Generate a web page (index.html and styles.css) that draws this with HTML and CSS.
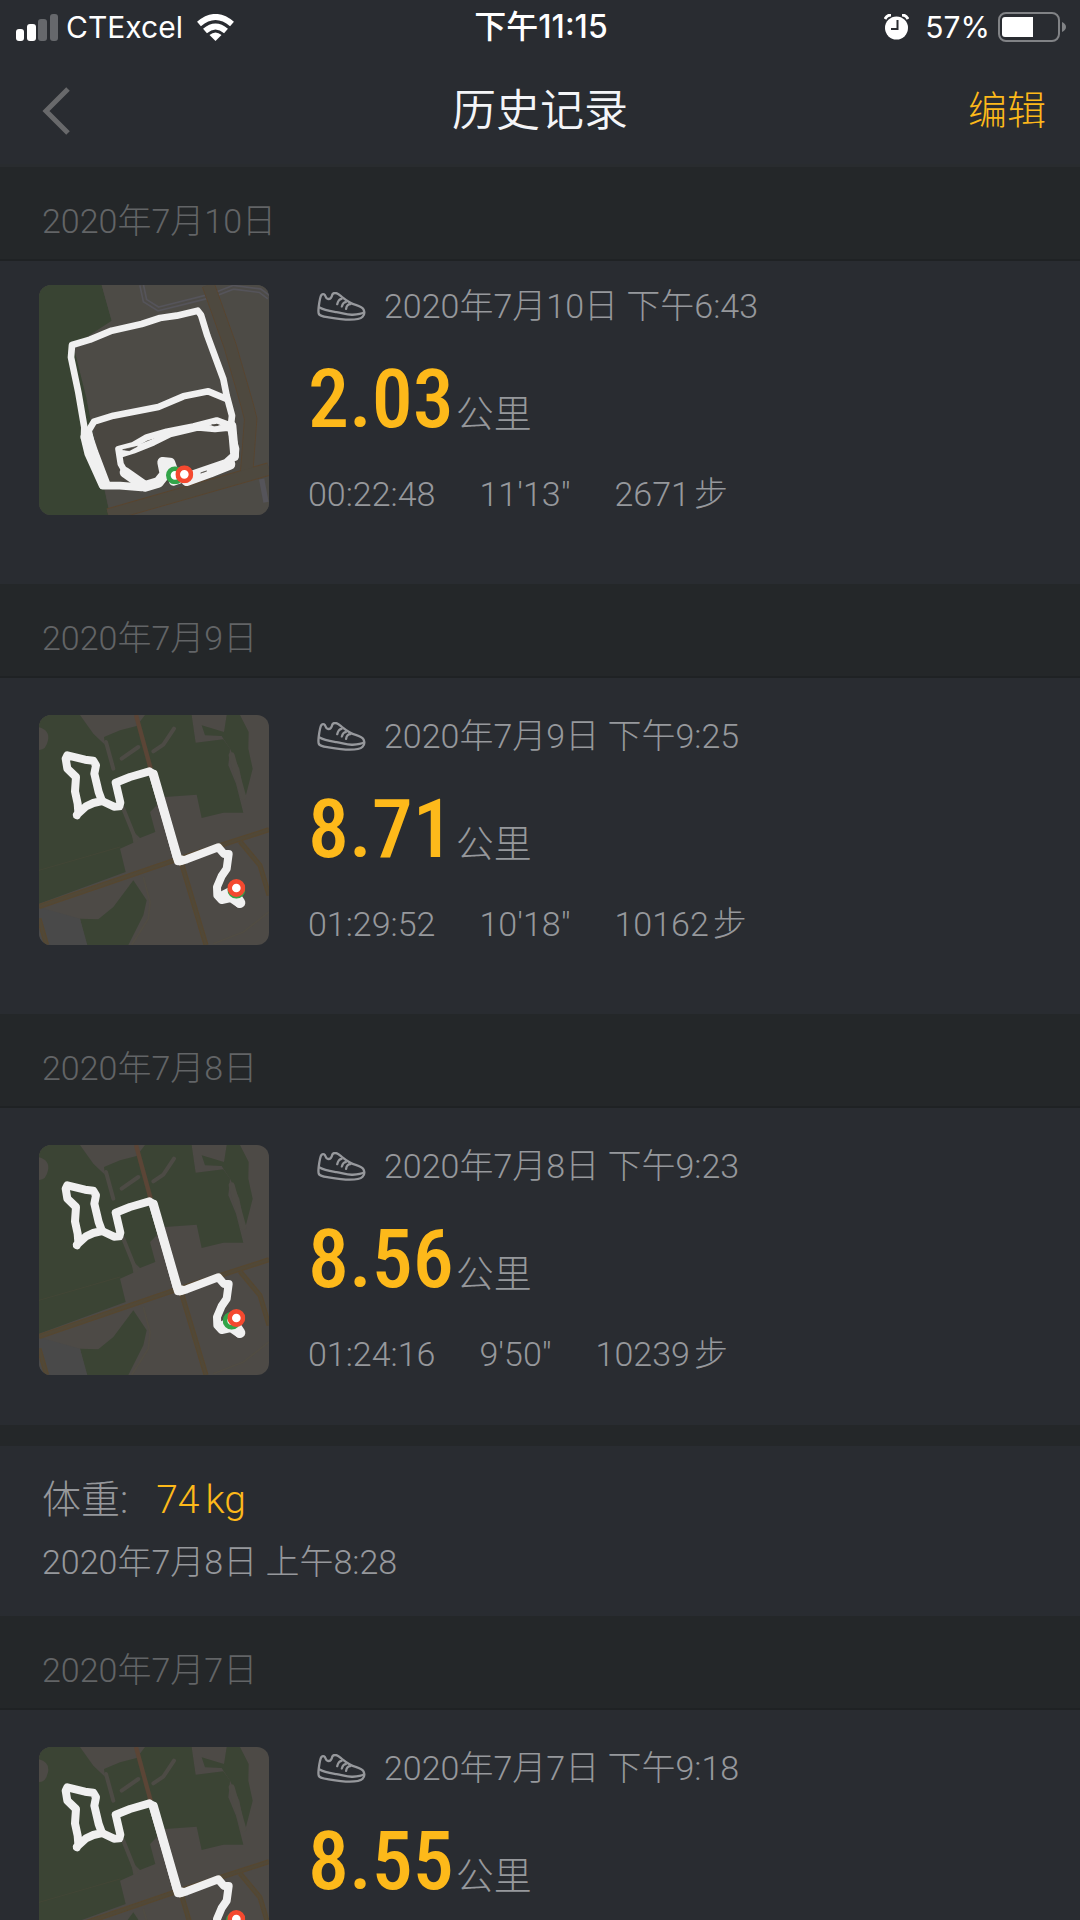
FILE: index.html
```html
<!DOCTYPE html>
<html lang="zh-CN">
<head>
  <meta charset="UTF-8">
  <meta name="viewport" content="width=device-width, initial-scale=1">
  <title>历史记录</title>
  <link rel="stylesheet" href="styles.css">
</head>
<body>

  <!-- Shared drawings -->
  <svg class="defs" aria-hidden="true">
    <symbol id="shoe" viewBox="0 0 146 88">
      <g fill="none" stroke="currentColor" stroke-width="7" stroke-linecap="round" stroke-linejoin="round">
        <path d="M12 9C8 14 6 28 4 44C3 53 2 60 4 66C7 74 20 75 34 77C58 81 78 84 98 84C116 84 131 81 137 75C143 69 143 60 140 53C137 47 128 43 116 39C99 35 90 28 78 18C70 12 65 6 59 4C53 2 47 4 45 8C43 17 38 22 31 21C24 20 26 10 20 7C17 6 14 7 12 9Z"/>
        <path d="M5 46C22 56 40 58 58 61C80 65 90 70 107 69C120 68 132 67 141 62"/>
        <path d="M73 21C66 22 62 29 60 37M86 31C79 31 76 38 74 44M100 37C92 37 88 44 87 51"/>
      </g>
    </symbol>

    <symbol id="park-map" viewBox="27 29 690 690">
      <rect x="27" y="29" width="690" height="690" fill="#4d4a46"/>
      <path d="M27 29H150L190 85L225 118L222 95L270 75L320 62L345 29H485L497 112L580 102L600 130L595 180L618 235L640 322L580 322L515 338L500 268L405 275L360 320L376 380L330 398L303 372L310 412L270 430L287 500L27 595Z" fill="#3b4434"/>
      <path d="M515 60L582 80L590 29H630L656 80L655 130L668 190L645 280L628 190L600 130L575 92L525 90Z" fill="#3b4434"/>
      <path d="M27 66Q60 75 54 105Q48 135 27 134Z" fill="#4d4a46"/>
      <path d="M150 640L205 642L250 605L310 525L350 585L340 630L295 719H170Z" fill="#3b4434"/>
      <path d="M27 606L150 640L172 719H27Z" fill="#494949"/>
      <g fill="none" stroke="#4d4b45" stroke-width="12" stroke-linecap="round">
        <path d="M228 110L250 190M275 160L325 125M370 138L400 118L432 70M280 310L318 405"/>
        <path d="M605 150L640 275" stroke-width="18"/>
      </g>
      <path d="M27 495L270 425" fill="none" stroke="#434636" stroke-width="3"/>
      <g fill="none" stroke="#504c43" stroke-width="5">
        <path d="M340 515L360 590L355 640L305 719M550 715L640 680L717 620"/>
      </g>
      <g fill="none" stroke="#57472f" stroke-width="15">
        <path d="M27 604L430 466L717 373M455 475L528 719M630 408L690 480L717 570M27 640L50 719"/>
      </g>
      <g fill="none" stroke="#514837" stroke-width="9">
        <path d="M27 604L430 466L717 373M455 475L528 719M630 408L690 480L717 570M27 640L50 719"/>
      </g>
      <path d="M318 29L362 190" fill="none" stroke="#5b4536" stroke-width="13"/>
      <g fill="none" stroke="#f0f0f0" stroke-width="24" stroke-linecap="round" stroke-linejoin="round">
        <path d="M141 330L145 320L143 295L135 258L138 215L112 190L107 160L112 150L165 163L190 166L198 180L193 205L206 260L216 287L190 293L168 303L141 328"/>
        <path d="M216 287L252 304L268 303L271 292L257 232L300 215L358 198L368 205L407 335L440 455L449 468L470 462L565 426L582 446L596 446L590 490L575 512L561 545L562 570L575 584L602 578L626 594"/>
        <path d="M370 206L445 466L456 464" stroke-width="27"/>
        <path d="M575 575L600 562L622 580L630 592" stroke-width="32"/>
      </g>
    </symbol>

    <symbol id="pin" viewBox="0 0 54 54">
      <circle cx="27" cy="27" r="20" fill="#fff" stroke="currentColor" stroke-width="14"/>
    </symbol>
  </svg>

  <header class="top">
    <div class="status">
      <div class="status-left">
        <svg class="signal" viewBox="0 0 42 27" aria-hidden="true">
          <rect x="0" y="15" width="8" height="12" rx="3" fill="#fff"/>
          <rect x="11" y="10" width="9" height="17" rx="3" fill="#fff"/>
          <rect x="22" y="5" width="9" height="22" rx="3" fill="#66686c"/>
          <rect x="34" y="0" width="8" height="27" rx="3" fill="#66686c"/>
        </svg>
        <span>CTExcel</span>
        <svg class="wifi" viewBox="0 0 37 27" aria-hidden="true">
          <g fill="none" stroke="#fff" stroke-width="6">
            <path d="M2 10Q18.500 -4 35 10"/>
            <path d="M8 17Q18.500 8 29 17"/>
          </g>
          <path d="M12.500 21Q18.500 16 24.500 21L18.500 27Z" fill="#fff"/>
        </svg>
      </div>
      <span class="clock">下午11:15</span>
      <div class="status-right">
        <svg class="alarm" viewBox="0 0 25 26" aria-hidden="true">
          <circle cx="12.500" cy="14" r="11.500" fill="#fff"/>
          <path d="M1 5Q3 1 7 1M24 5Q22 1 18 1" fill="none" stroke="#fff" stroke-width="3"/>
          <path d="M13.500 6V15H7" fill="none" stroke="#2a2c31" stroke-width="2"/>
        </svg>
        <span>57%</span>
        <svg class="battery" viewBox="0 0 68 30" aria-hidden="true">
          <rect x="1" y="1" width="60" height="28" rx="7" fill="none" stroke="#818386" stroke-width="2"/>
          <path d="M7 5H35V25H7Q4 25 4 22V8Q4 5 7 5Z" fill="#fff"/>
          <path d="M64 10Q68 12 68 15T64 20Z" fill="#818386"/>
        </svg>
      </div>
    </div>
    <nav class="navbar">
      <button class="back" type="button" aria-label="返回">
        <svg viewBox="0 0 28 48" aria-hidden="true"><path d="M26 2L4 24L26 46" fill="none" stroke="#68696b" stroke-width="5"/></svg>
      </button>
      <h1>历史记录</h1>
      <button class="edit" type="button">编辑</button>
    </nav>
  </header>

  <main class="history">
    <section>
      <h2 class="day">2020年7月10日</h2>
      <article class="run run-first">
        <svg class="map" viewBox="27 28 690 690" role="img" aria-label="路线">
          <rect x="27" y="28" width="690" height="690" fill="#4b4945"/>
          <path d="M27 28H215L245 135L170 370L205 560L240 718H27Z" fill="#394433"/>
          <path d="M215 28H717V718H240L170 370L130 210L245 135Z" fill="#4d4b46"/>
          <path d="M190 440L540 345L610 420L625 545L350 645L220 630Z" fill="#4a4741"/>
          <g fill="none" stroke="#55545a" stroke-width="16">
            <path d="M335 28L345 75L385 100L545 60L610 35L690 45L717 65"/>
            <path d="M695 610L708 680"/>
          </g>
          <g fill="none" stroke="#4d4b48" stroke-width="6">
            <path d="M335 28L345 75L385 100L545 60L610 35L690 45L717 65"/>
          </g>
          <g fill="none" stroke="#59452f" stroke-width="40">
            <path d="M535 28L600 210L652 390L662 430L650 590"/>
            <path d="M235 718L717 580"/>
          </g>
          <g fill="none" stroke="#4e493f" stroke-width="35">
            <path d="M535 28L600 210L652 390L662 430L650 590"/>
            <path d="M235 718L717 580"/>
          </g>
          <g fill="none" stroke="#f0f0f0" stroke-width="20" stroke-linecap="round" stroke-linejoin="round">
            <path d="M162 485L163 455L145 350L123 245L126 208L180 192L245 165L335 145L390 127L440 120L503 105L513 118L532 180L580 310L590 360L606 420L602 455"/>
            <path d="M218 630L188 520L176 465L192 438L250 420L385 394L460 362L535 347L590 370"/>
            <path d="M163 485L175 535L218 630L270 630L335 635" stroke-width="23"/>
            <path d="M175 480L192 530L227 622" stroke-width="26"/>
            <path d="M340 632L292 600L272 565L265 520L310 508L350 485L410 468L490 452L560 434L604 450" stroke-width="19"/>
            <path d="M272 536L310 524L370 500L420 475L505 455L555 460L600 455L618 520L616 545"/>
            <path d="M606 450L614 540L590 562L520 586L430 617" stroke-width="26"/>
            <path d="M600 566L540 590L470 615" stroke-width="32"/>
            <path d="M285 590L345 632L385 620L405 595L398 560L420 562L430 590" stroke-width="32"/>
          </g>
          <path d="M278 522L322 512L298 525ZM545 447L565 449L552 451ZM512 592L530 586L518 590Z" fill="#4a4741" stroke="#4a4741" stroke-width="2"/>
          <use class="pin-start" href="#pin" x="408" y="572" width="54" height="54"/>
          <use class="pin-end" href="#pin" x="436" y="569" width="54" height="54"/>
        </svg>
        <div class="info">
          <p class="when"><svg class="shoe" aria-hidden="true"><use href="#shoe"/></svg>2020年7月10日 下午6:43</p>
          <p class="distance"><strong>2.03</strong>公里</p>
          <p class="stats"><span>00:22:48</span><span>11'13"</span><span class="steps">2671<span>步</span></span></p>
        </div>
      </article>
    </section>

    <section>
      <h2 class="day">2020年7月9日</h2>
      <article class="run">
        <svg class="map" viewBox="27 29 690 690" role="img" aria-label="路线">
          <use href="#park-map" x="27" y="29" width="690" height="690"/>
          <use class="pin-start" href="#pin" x="592" y="526" width="54" height="54"/>
          <use class="pin-end" href="#pin" x="592" y="521" width="54" height="54"/>
        </svg>
        <div class="info">
          <p class="when"><svg class="shoe" aria-hidden="true"><use href="#shoe"/></svg>2020年7月9日 下午9:25</p>
          <p class="distance"><strong>8.71</strong>公里</p>
          <p class="stats"><span>01:29:52</span><span>10'18"</span><span class="steps">10162<span>步</span></span></p>
        </div>
      </article>
    </section>

    <section>
      <h2 class="day">2020年7月8日</h2>
      <article class="run run-joined">
        <svg class="map" viewBox="27 29 690 690" role="img" aria-label="路线">
          <use href="#park-map" x="27" y="29" width="690" height="690"/>
          <use class="pin-start" href="#pin" x="578" y="529" width="54" height="54"/>
          <use class="pin-end" href="#pin" x="592" y="521" width="54" height="54"/>
        </svg>
        <div class="info">
          <p class="when"><svg class="shoe" aria-hidden="true"><use href="#shoe"/></svg>2020年7月8日 下午9:23</p>
          <p class="distance"><strong>8.56</strong>公里</p>
          <p class="stats"><span>01:24:16</span><span>9'50"</span><span class="steps">10239<span>步</span></span></p>
        </div>
      </article>
      <article class="weight">
        <p class="weight-value">体重: <span>74<span>kg</span></span></p>
        <p>2020年7月8日 上午8:28</p>
      </article>
    </section>

    <section>
      <h2 class="day">2020年7月7日</h2>
      <article class="run">
        <svg class="map" viewBox="27 29 690 690" role="img" aria-label="路线">
          <use href="#park-map" x="27" y="29" width="690" height="690"/>
          <use class="pin-start" href="#pin" x="588" y="523" width="54" height="54"/>
          <use class="pin-end" href="#pin" x="592" y="518" width="54" height="54"/>
        </svg>
        <div class="info">
          <p class="when"><svg class="shoe" aria-hidden="true"><use href="#shoe"/></svg>2020年7月7日 下午9:18</p>
          <p class="distance"><strong>8.55</strong>公里</p>
        </div>
      </article>
    </section>
  </main>

</body>
</html>
```
FILE: styles.css
```css
* {
  box-sizing: border-box;
  margin: 0;
  padding: 0;
}

body {
  display: flex;
  flex-direction: column;
  height: 100vh;
  overflow: hidden;
  background: #292c31;
  color: #96989c;
  font-family: Roboto, "Noto Sans CJK SC", sans-serif;
  font-size: 34px;
  font-weight: 300;
  line-height: 40px;
}

button {
  background: none;
  border: none;
  cursor: pointer;
  font: inherit;
}

svg {
  display: block;
  flex-shrink: 0;
}

.defs {
  display: none;
}

/* Status bar */
.status {
  display: grid;
  grid-template-columns: 1fr auto 1fr;
  align-items: center;
  height: 56px;
  padding: 0 14px 2px 16px;
  color: #fff;
  font-family: Inter, "Noto Sans CJK SC", sans-serif;
  font-size: 30px;
  font-weight: 400;
}

.status-left,
.status-right {
  display: flex;
  align-items: center;
  gap: 8px;
}

.status-right {
  justify-content: flex-end;
}

.clock {
  font-size: 32px;
  font-weight: 500;
}

.signal {
  width: 42px;
  height: 27px;
}

.wifi {
  width: 37px;
  height: 27px;
  margin-left: 6px;
}

.alarm {
  width: 25px;
  height: 26px;
  margin-right: 8px;
}

.battery {
  width: 68px;
  height: 30px;
}

/* Title bar */
.navbar {
  display: grid;
  grid-template-columns: 1fr auto 1fr;
  align-items: center;
  height: 111px;
  padding: 2px 34px 0;
  border-bottom: 3px solid #292c2f;
}

.navbar h1 {
  color: #f4f5f8;
  font-size: 44px;
  font-weight: 350;
  line-height: 60px;
}

.back {
  padding-left: 8px;
}

.back svg {
  width: 28px;
  height: 48px;
}

.edit {
  justify-self: end;
  color: #fdb91a;
  font-size: 39px;
}

/* Records */
.history {
  flex: 1;
  overflow-y: auto;
  scrollbar-width: none;
}

.day {
  height: 94px;
  padding: 34px 42px 0;
  background: #242729;
  border-bottom: 2px solid #1f2224;
  color: #626466;
  font-size: 34px;
  font-weight: 300;
}

.run {
  display: flex;
  gap: 39px;
  padding: 37px 39px 69px;
}

.run-first {
  padding-top: 24px;
}

.run-joined {
  padding-bottom: 50px;
}

.map {
  width: 230px;
  height: 230px;
  border-radius: 12px;
}

.pin-start {
  color: #32a449;
}

.pin-end {
  color: #f4492f;
}

.info {
  display: flex;
  flex: 1;
  flex-direction: column;
  gap: 28px;
  padding-top: 1px;
}

.when {
  display: flex;
  align-items: center;
  gap: 18px;
  padding-left: 9px;
}

.shoe {
  width: 49px;
  height: 29px;
}

.distance {
  display: flex;
  align-items: baseline;
  gap: 2px;
  height: 92px;
  font-size: 38px;
}

.distance strong {
  color: #fdb91a;
  font-family: "Roboto Condensed", "Liberation Sans Narrow", sans-serif;
  font-size: 82px;
  font-weight: 500;
  line-height: 90px;
}

.stats {
  display: flex;
  gap: 44px;
}

.steps {
  display: flex;
  gap: 4px;
}

.weight {
  padding: 32px 42px 34px;
  border-top: 21px solid #242729;
}

.weight-value {
  display: flex;
  gap: 28px;
  margin-bottom: 20px;
  font-size: 39px;
  line-height: 44px;
}

.weight-value > span {
  display: flex;
  gap: 6px;
  color: #fdb91a;
}
```
